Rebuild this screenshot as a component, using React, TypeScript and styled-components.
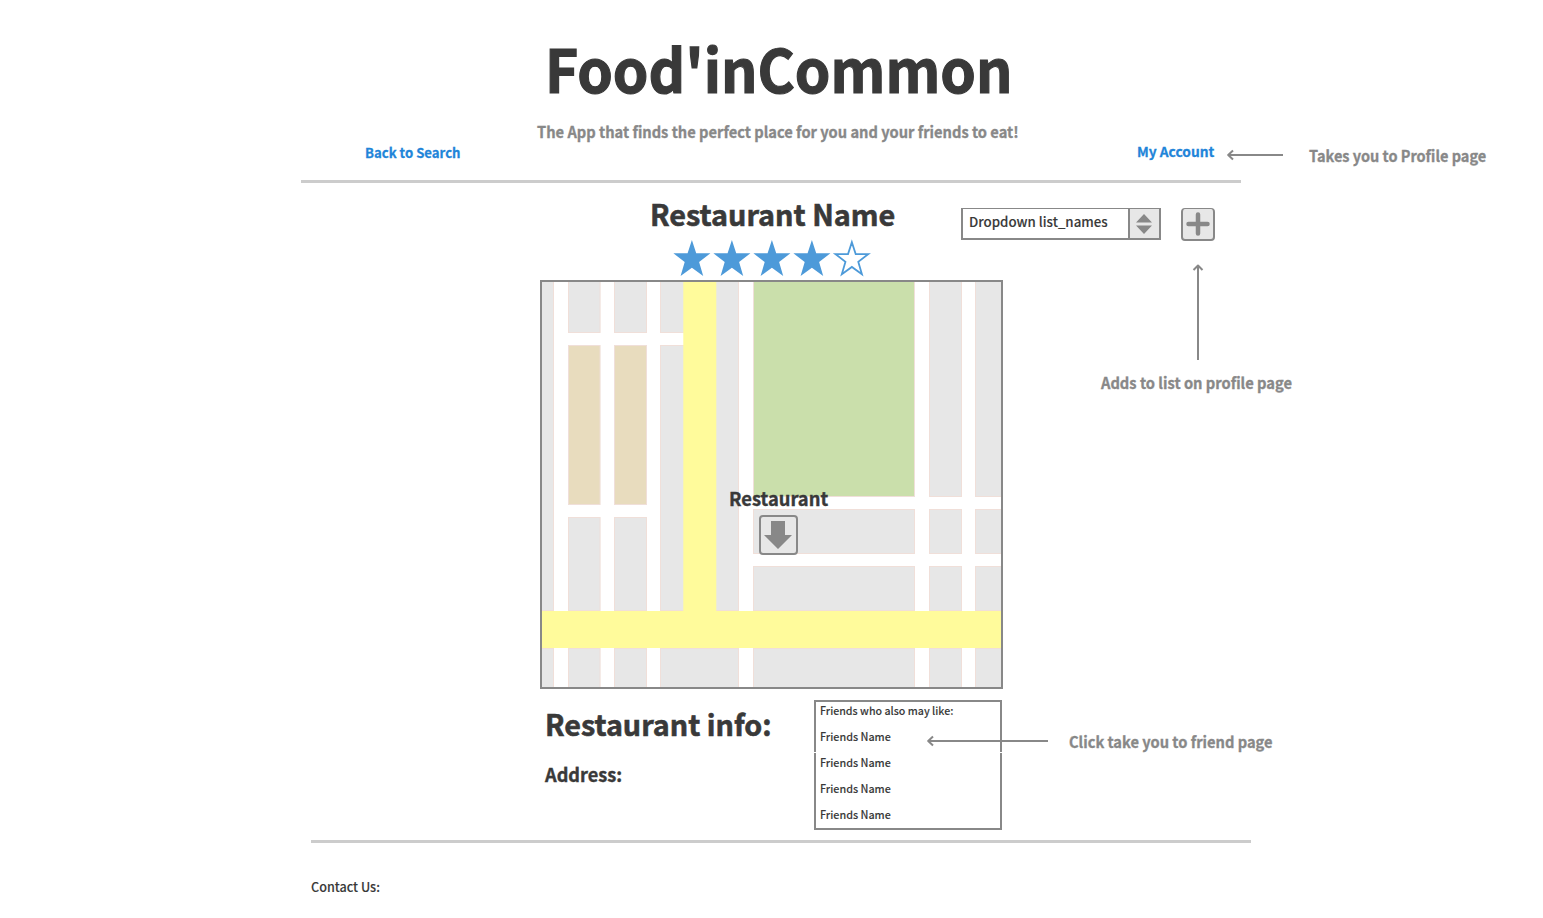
import React from 'react';
import styled, { createGlobalStyle } from 'styled-components';

const ink = '#393939';
const grey = '#888888';
const blue = '#1f85d9';

const GlobalStyle = createGlobalStyle`
  * { box-sizing: border-box; }
  body {
    margin: 0;
    background: #ffffff;
    color: ${ink};
    font-family: 'Noto Sans CJK SC', 'Noto Sans', sans-serif;
  }
`;

const Page = styled.div`
  width: 1543px;
  height: 918px;
  overflow: hidden;
  display: flex;
  flex-direction: column;
`;

/* stretch adjusts the width of the letterforms */
const Text = styled.div<{ $size: number; $stretch: number; $weight?: number; $color?: string; $line?: number }>`
  flex: none;
  margin: 0;
  white-space: nowrap;
  font-size: ${p => p.$size}px;
  font-weight: ${p => p.$weight ?? 700};
  line-height: ${p => p.$line ?? 20}px;
  color: ${p => p.$color ?? ink};
  -webkit-text-stroke: ${p => (p.$weight ? 0.008 : 0.02)}em currentColor;
  transform: scaleX(${p => p.$stretch});
  transform-origin: left center;
`;

const Header = styled.header`
  height: 141px;
  padding-top: 37px;
  display: flex;
  flex-direction: column;
  gap: 23px;
`;

const TitleSlot = styled.div`
  padding-left: 545px;
`;

const TaglineSlot = styled.div`
  padding-left: 537px;
`;

const Nav = styled.nav`
  height: 39px;
  padding-left: 364.5px;
  display: flex;
  align-items: flex-start;
`;

const BackLink = styled.div`
  width: 772px;
  padding-top: 1px;
`;

const AccountLink = styled.div`
  width: 90px;
`;

const NavNote = styled.div`
  display: flex;
  gap: 26px;
  padding-top: 3px;
`;

const NavNoteLabel = styled.div`
  padding-top: 1px;
`;

const Rule = styled.div<{ $left: number }>`
  flex: none;
  width: 940px;
  height: 3px;
  margin-left: ${p => p.$left}px;
  background: #cccccc;
`;

const TopRow = styled.section`
  height: 97px;
  padding-left: 650px;
  display: flex;
  align-items: flex-start;
`;

const Heading = styled.div`
  width: 311px;
  padding-top: 15px;
`;

const Stars = styled.svg`
  display: block;
  margin: 10px 0 0 22px;
`;

const Select = styled.div`
  width: 200px;
  height: 32px;
  margin: 25px 20px 0 0;
  display: flex;
  border: 2px solid ${grey};
  border-top-width: 1px;
`;

const SelectLabel = styled.div`
  flex: 1;
  padding: 2px 0 0 5.5px;
`;

const Stepper = styled.div`
  width: 31px;
  border-left: 2px solid ${grey};
  background: #e7e7e7;
  display: flex;
  align-items: center;
  justify-content: center;
`;

const IconButton = styled.div<{ $w: number; $h: number; $top?: number }>`
  width: ${p => p.$w}px;
  height: ${p => p.$h}px;
  border: 2px solid ${grey};
  border-top-width: ${p => p.$top ?? 2}px;
  border-radius: 4px;
  background: #e7e7e7;
  display: flex;
  align-items: center;
  justify-content: center;
`;

const AddSlot = styled.div`
  padding-top: 25px;
`;

const MapRow = styled.section`
  height: 409px;
  padding-left: 540px;
  display: flex;
`;

const MapFrame = styled.div`
  position: relative;
  width: 463px;
  height: 409px;
  border: 2px solid ${grey};
`;

const MapDrawing = styled.svg`
  display: block;
`;

const Marker = styled.div`
  position: absolute;
  left: 186.5px;
  top: 206px;
  width: 100px;
`;

const MarkerButton = styled.div`
  margin: 7px 0 0 30px;
`;

const AddNote = styled.div`
  margin: -16px 0 0 98px;
  display: flex;
  flex-direction: column;
  gap: 12px;
`;

const UpArrow = styled.svg`
  display: block;
  margin-left: 90px;
`;

const InfoRow = styled.section`
  height: 151px;
  padding-left: 545px;
  display: flex;
`;

const Info = styled.div`
  width: 269px;
  padding-top: 19px;
  display: flex;
  flex-direction: column;
  gap: 26px;
`;

const Friends = styled.div`
  width: 188px;
  margin-top: 11px;
  display: flex;
  flex-direction: column;
  gap: 1px;
`;

const FriendsPanel = styled.div<{ $first?: boolean }>`
  height: ${p => (p.$first ? 52 : 77)}px;
  border: solid ${grey};
  border-width: ${p => (p.$first ? '2px 2px 0' : '0 2px 2px')};
  padding: 0 3.5px;
  display: flex;
  flex-direction: column;
  gap: 6px;
`;

const PanelText = styled(Text)`
  margin-top: -1px;
  margin-bottom: 1px;
`;

const FirstPanelText = styled(Text)`
  margin-top: -2px;
  margin-bottom: 2px;
`;

const FriendNote = styled.div`
  position: relative;
  margin: 41px 0 0 -75px;
  display: flex;
  gap: 21px;
`;

const FriendNoteLabel = styled.div`
  padding-top: 1px;
`;

const Footer = styled.footer`
  padding: 34px 0 0 311px;
`;

const LeftArrow = ({ length }: { length: number }) => (
  <svg width={length} height="20" fill="none" stroke={grey} strokeWidth="2">
    <path d={`M1 11H${length}`} />
    <path d="M6 6.5L1.2 11L6 15.5" strokeLinejoin="round" />
  </svg>
);

const star = 'M18.5 0L22.8 13.3H37L25.7 22L29.8 36L18.5 27.8L7.2 36L11.3 22L0 13.3H14.2Z';

type Block = [left: number, top: number, right: number, bottom: number, fill?: string];
const tan = '#e8dcbe';
const green = '#cadfab';

const blocks: Block[] = [
  [-2, -2, 11, 328],
  [26, -2, 57.6, 50], [26, 63, 57.6, 222, tan], [26, 235, 57.6, 328],
  [72, -2, 104, 50], [72, 63, 104, 222, tan], [72, 235, 104, 328],
  [118, -2, 150, 50], [118, 63, 150, 328],
  [170, -2, 196, 328],
  [211, -2, 372, 214, green], [211, 227, 372, 271], [211, 284, 372, 328],
  [387, -2, 419, 214], [387, 227, 419, 271], [387, 284, 419, 328],
  [433, -2, 470, 214], [433, 227, 470, 271], [433, 284, 470, 328],
  [-2, 366, 11, 410], [26, 366, 57.6, 410], [72, 366, 104, 410], [118, 366, 196, 410],
  [211, 366, 372, 410], [387, 366, 419, 410], [433, 366, 470, 410],
];

const CityMap = () => (
  <MapDrawing width="459" height="405">
    {blocks.map(([l, t, r, b, fill], i) => (
      <rect key={i} x={l + 0.5} y={t + 0.5} width={r - l} height={b - t} fill={fill ?? '#e7e7e7'} stroke="#f0dfd9" />
    ))}
    <rect x="141.3" y="0" width="33" height="340" fill="#fffb9b" />
    <rect x="0" y="329" width="459" height="37" fill="#fffb9b" />
  </MapDrawing>
);

const FriendItem = () => (
  <PanelText $size={11} $weight={500} $stretch={0.978}>Friends Name</PanelText>
);

export default function App() {
  return (
    <Page>
      <GlobalStyle />
      <Header>
        <TitleSlot><Text as="h1" $size={59.5} $line={61} $stretch={0.957}>Food'inCommon</Text></TitleSlot>
        <TaglineSlot>
          <Text $size={15.3} $stretch={0.958} $color={grey}>The App that finds the perfect place for you and your friends to eat!</Text>
        </TaglineSlot>
      </Header>
      <Nav>
        <BackLink><Text $size={13.5} $stretch={0.975} $color={blue}>Back to Search</Text></BackLink>
        <AccountLink><Text $size={13.5} $stretch={1.02} $color={blue}>My Account</Text></AccountLink>
        <NavNote>
          <LeftArrow length={56} />
          <NavNoteLabel><Text $size={15.3} $stretch={0.948} $color={grey}>Takes you to Profile page</Text></NavNoteLabel>
        </NavNote>
      </Nav>
      <Rule $left={301} />

      <TopRow>
        <Heading>
          <Text as="h2" $size={29} $line={30} $stretch={0.993}>Restaurant Name</Text>
          <Stars width="200" height="40" viewBox="-1.4 -1 200 40">
            {[0, 1, 2, 3].map(i => <path key={i} d={star} transform={`translate(${i * 40} 1)`} fill="#4d9ad9" />)}
            <path d={star} transform="translate(162 3.2) scale(.89)" fill="none" stroke="#4d9ad9" strokeWidth="2" />
          </Stars>
        </Heading>
        <Select>
          <SelectLabel><Text $size={13.5} $weight={500} $stretch={0.983}>Dropdown list_names</Text></SelectLabel>
          <Stepper>
            <svg width="17" height="20" fill={grey}>
              <path d="M8 0L16 8.5H0ZM8 20L16 11.5H0Z" />
            </svg>
          </Stepper>
        </Select>
        <AddSlot>
          <IconButton $w={34} $h={33} $top={1}>
            <svg width="24" height="24" stroke={grey} strokeWidth="4.5" strokeLinecap="round">
              <path d="M12 2.5V21.5M2.5 12H21.5" />
            </svg>
          </IconButton>
        </AddSlot>
      </TopRow>

      <MapRow>
        <MapFrame>
          <CityMap />
          <Marker>
            <Text $size={18.5} $stretch={0.991}>Restaurant</Text>
            <MarkerButton>
              <IconButton $w={39.5} $h={40}>
                <svg width="28" height="28" fill={grey}>
                  <path d="M7 0H21V14H28L14 28L0 14H7Z" />
                </svg>
              </IconButton>
            </MarkerButton>
          </Marker>
        </MapFrame>
        <AddNote>
          <UpArrow width="14" height="96" fill="none" stroke={grey} strokeWidth="2">
            <path d="M7 1.5V96" />
            <path d="M2.5 6L7 1.5L11.5 6" strokeLinejoin="round" />
          </UpArrow>
          <Text $size={15.3} $stretch={0.96} $color={grey}>Adds to list on profile page</Text>
        </AddNote>
      </MapRow>

      <InfoRow>
        <Info>
          <Text as="h2" $size={29} $line={30} $stretch={0.99}>Restaurant info:</Text>
          <Text $size={18.5} $stretch={0.981}>Address:</Text>
        </Info>
        <Friends>
          <FriendsPanel $first>
            <FirstPanelText $size={11} $weight={500} $stretch={0.967}>Friends who also may like:</FirstPanelText>
            <FirstPanelText $size={11} $weight={500} $stretch={0.978}>Friends Name</FirstPanelText>
          </FriendsPanel>
          <FriendsPanel>
            <FriendItem />
            <FriendItem />
            <FriendItem />
          </FriendsPanel>
        </Friends>
        <FriendNote>
          <LeftArrow length={121} />
          <FriendNoteLabel><Text $size={15.3} $stretch={0.957} $color={grey}>Click take you to friend page</Text></FriendNoteLabel>
        </FriendNote>
      </InfoRow>
      <Rule $left={311} />
      <Footer>
        <Text $size={13} $weight={500} $stretch={0.97}>Contact Us:</Text>
      </Footer>
    </Page>
  );
}
